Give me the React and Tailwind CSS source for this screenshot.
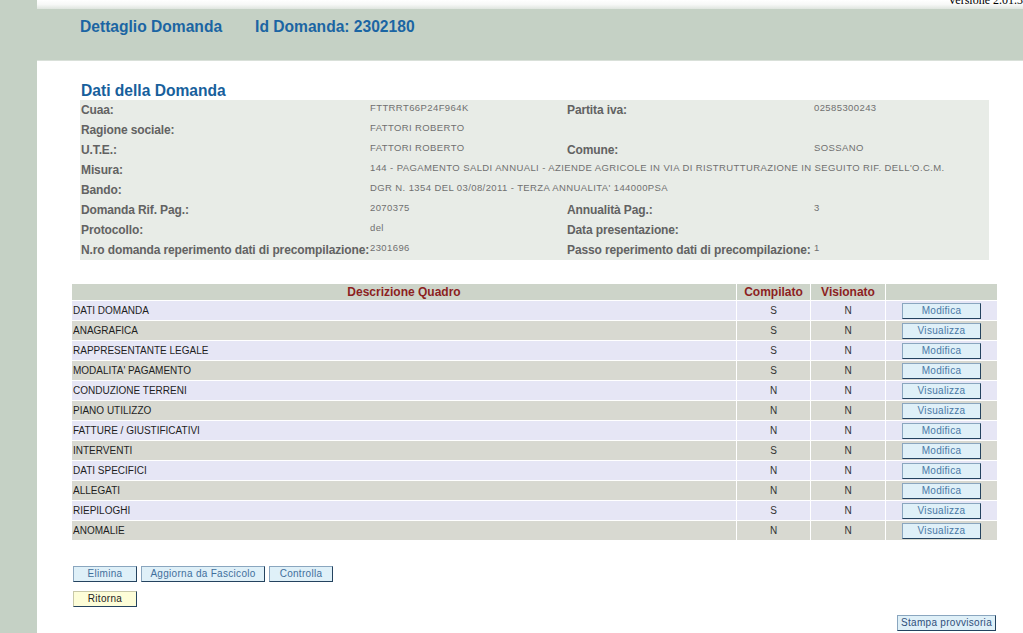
import React from "react";

const info = [
  ["Cuaa:", "FTTRRT66P24F964K", "Partita iva:", "02585300243"],
  ["Ragione sociale:", "FATTORI ROBERTO", "", ""],
  ["U.T.E.:", "FATTORI ROBERTO", "Comune:", "SOSSANO"],
  ["Misura:", "144 - PAGAMENTO SALDI ANNUALI - AZIENDE AGRICOLE IN VIA DI RISTRUTTURAZIONE IN SEGUITO RIF. DELL'O.C.M.", null, null],
  ["Bando:", "DGR N. 1354 DEL 03/08/2011 - TERZA ANNUALITA' 144000PSA", null, null],
  ["Domanda Rif. Pag.:", "2070375", "Annualità Pag.:", "3"],
  ["Protocollo:", "del", "Data presentazione:", ""],
  ["N.ro domanda reperimento dati di precompilazione:", "2301696", "Passo reperimento dati di precompilazione:", "1"],
];

const quadri = [
  ["DATI DOMANDA", "S", "N", "Modifica"],
  ["ANAGRAFICA", "S", "N", "Visualizza"],
  ["RAPPRESENTANTE LEGALE", "S", "N", "Modifica"],
  ["MODALITA' PAGAMENTO", "S", "N", "Modifica"],
  ["CONDUZIONE TERRENI", "N", "N", "Visualizza"],
  ["PIANO UTILIZZO", "N", "N", "Visualizza"],
  ["FATTURE / GIUSTIFICATIVI", "N", "N", "Modifica"],
  ["INTERVENTI", "S", "N", "Modifica"],
  ["DATI SPECIFICI", "N", "N", "Modifica"],
  ["ALLEGATI", "N", "N", "Modifica"],
  ["RIEPILOGHI", "S", "N", "Visualizza"],
  ["ANOMALIE", "N", "N", "Visualizza"],
];

function Btn({ children, className = "" }) {
  return (
    <div
      className={
        "h-[16px] flex items-center justify-center text-[10px] tracking-[0.3px] leading-none border border-[#8aa6bf] border-r-[#24435f] border-b-[#24435f] " +
        className
      }
    >
      {children}
    </div>
  );
}

const labelCls = "h-[20px] flex items-center text-[12px] tracking-[-0.12px] font-bold text-[#626262] whitespace-nowrap";
const valueCls = "h-[20px] flex items-center pb-[3px] text-[9.5px] tracking-[0.4px] text-[#707070] whitespace-nowrap";

export default function App() {
  return (
    <div
      className="w-[1023px] h-[633px] flex bg-[#c5d1c5] overflow-hidden"
      style={{ fontFamily: '"Liberation Sans", Arial, sans-serif' }}
    >
      <div className="w-[37px] shrink-0 bg-[#c5d1c5]" />
      <div className="flex-1 flex flex-col min-w-0">
        <div className="relative h-[9px] bg-gradient-to-b from-[#ffffff] via-[#f7f8f7] to-[#dfe5df] overflow-hidden">
          <div
            className="absolute left-[911px] top-[-6px] text-[12px] leading-[12px] text-black whitespace-nowrap"
            style={{ fontFamily: '"Liberation Serif", "Times New Roman", serif' }}
          >
            Versione 2.01.33
          </div>
        </div>
        <div className="h-[52px] bg-[#c5d1c5] border-b border-[#d9e0d9] flex items-start pt-[6px] pl-[43px] gap-[33px] text-[15.6px] font-bold text-[#1b65a3]">
          <span>Dettaglio Domanda</span>
          <span>Id Domanda: 2302180</span>
        </div>
        <div className="flex-1 bg-white flex flex-col pt-[20px]">
          <div className="ml-[44px] text-[15.6px] leading-[19px] font-bold text-[#17609c]">
            Dati della Domanda
          </div>
          <div className="ml-[43px] w-[909px] bg-[#e8ece7] grid grid-cols-[290px_197px_247px_1fr]">
            {info.map((r, i) =>
              r[2] === null ? (
                <React.Fragment key={i}>
                  <div className={labelCls + " pl-[1px]"}>{r[0]}</div>
                  <div className={valueCls + " col-span-3"}>{r[1]}</div>
                </React.Fragment>
              ) : (
                <React.Fragment key={i}>
                  <div className={labelCls + " pl-[1px]"}>{r[0]}</div>
                  <div className={valueCls}>{r[1]}</div>
                  <div className={labelCls}>{r[2]}</div>
                  <div className={valueCls}>{r[3]}</div>
                </React.Fragment>
              )
            )}
          </div>

          <div className="mt-[24px] ml-[35px] w-[925px] grid grid-cols-[664px_73px_74px_111px] gap-px">
            <div className="h-[16px] bg-[#cdd4c9] flex items-center justify-center text-[12px] font-bold text-[#8c1f1f]">
              Descrizione Quadro
            </div>
            <div className="h-[16px] bg-[#cdd4c9] flex items-center justify-center text-[12px] font-bold text-[#8c1f1f]">
              Compilato
            </div>
            <div className="h-[16px] bg-[#cdd4c9] flex items-center justify-center text-[12px] font-bold text-[#8c1f1f]">
              Visionato
            </div>
            <div className="h-[16px] bg-[#cdd4c9]" />
            {quadri.map((q, i) => {
              const bg = i % 2 === 0 ? "bg-[#e6e6f5]" : "bg-[#d8d9d1]";
              return (
                <React.Fragment key={i}>
                  <div className={"h-[19px] flex items-center pl-[1px] text-[10px] text-[#1e1e1e] " + bg}>
                    {q[0]}
                  </div>
                  <div className={"h-[19px] flex items-center justify-center text-[10px] text-[#333] " + bg}>
                    {q[1]}
                  </div>
                  <div className={"h-[19px] flex items-center justify-center text-[10px] text-[#333] " + bg}>
                    {q[2]}
                  </div>
                  <div className={"h-[19px] flex items-center justify-center " + bg}>
                    <Btn className="w-[79px] bg-[#dff0f8] text-[#4a79a6]">{q[3]}</Btn>
                  </div>
                </React.Fragment>
              );
            })}
          </div>

          <div className="mt-[26px] ml-[36px] flex gap-[4px]">
            <Btn className="w-[64px] bg-[#dff0f8] text-[#3f6f9c]">Elimina</Btn>
            <Btn className="w-[124px] bg-[#dff0f8] text-[#3f6f9c]">Aggiorna da Fascicolo</Btn>
            <Btn className="w-[64px] bg-[#dff0f8] text-[#3f6f9c]">Controlla</Btn>
          </div>
          <div className="mt-[9px] ml-[36px] flex">
            <Btn className="w-[64px] bg-[#fdfdd8] text-[#222] border-[#c8c8a8]">Ritorna</Btn>
          </div>
          <div className="mt-[8px] flex justify-end pr-[27px]">
            <Btn className="w-[99px] bg-[#dff0f8] text-[#2f4f7a] tracking-[0.1px]">Stampa provvisoria</Btn>
          </div>
        </div>
      </div>
    </div>
  );
}
